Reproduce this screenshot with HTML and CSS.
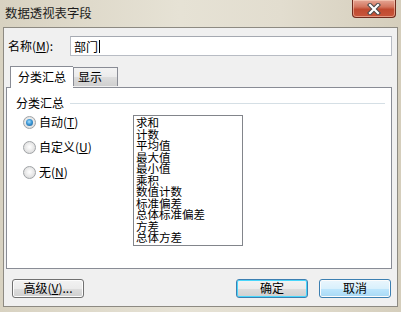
FILE: index.html
```html
<!DOCTYPE html>
<html lang="zh-CN">
<head>
    <meta charset="UTF-8">
    <title>数据透视表字段</title>
    <link rel="stylesheet" href="styles.css">
</head>
<body>

<div class="window">
    <!-- Title bar -->
    <div class="titlebar">
        <span class="title">数据透视表字段</span>
        <div class="close">
            <svg width="18" height="12" viewBox="0 0 18 12">
                <path d="M5 2 L13 10 M13 2 L5 10" stroke="#4a4a4a" stroke-width="4.2" stroke-linecap="square"/>
                <path d="M5 2 L13 10 M13 2 L5 10" stroke="#ffffff" stroke-width="2.2" stroke-linecap="square"/>
            </svg>
        </div>
    </div>

    <div class="client">
        <div class="name-row">
            <span class="name-label">名称(<u>M</u>):</span>
            <div class="name-input">部门<span class="caret"></span></div>
        </div>

        <div class="tabs">
            <div class="tab active">分类汇总</div>
            <div class="tab">显示</div>
        </div>

        <div class="panel">
            <div class="group-title">
                <span>分类汇总</span>
                <i class="group-line"></i>
            </div>

            <div class="group-body">
                <div class="radios">
                    <div class="radio checked"><span class="circle"></span>自动(<u>T</u>)</div>
                    <div class="radio"><span class="circle"></span>自定义(<u>U</u>)</div>
                    <div class="radio"><span class="circle"></span>无(<u>N</u>)</div>
                </div>

                <div class="listbox">
                    <div>求和</div>
                    <div>计数</div>
                    <div>平均值</div>
                    <div>最大值</div>
                    <div>最小值</div>
                    <div>乘积</div>
                    <div>数值计数</div>
                    <div>标准偏差</div>
                    <div>总体标准偏差</div>
                    <div>方差</div>
                    <div>总体方差</div>
                </div>
            </div>
        </div>

        <div class="buttons">
            <div class="btn">高级(<u>V</u>)...</div>
            <div class="spacer"></div>
            <div class="btn default">确定</div>
            <div class="btn hover">取消</div>
        </div>
    </div>
</div>

</body>
</html>
```

FILE: styles.css
```css
* {
    box-sizing: border-box;
    margin: 0;
    padding: 0;
}

body {
    font-family: "Noto Sans CJK SC", "DejaVu Sans", sans-serif;
    font-size: 12px;
    color: #000;
    background: #fff;
}

.window {
    width: 401px;
    height: 312px;
    background: linear-gradient(90deg, #d8d2c1 0%, #e6e2d5 45%, #e2ddcf 70%, #d5cebc 100%);
    display: flex;
    flex-direction: column;
}

/* Title bar */
.titlebar {
    height: 27px;
    display: flex;
    align-items: flex-start;
    justify-content: space-between;
    padding: 0 5px 0 5px;
}

.title {
    margin-top: 5px;
    font-size: 12.4px;
    line-height: 16px;
    color: #1c1c1c;
}

.close {
    width: 44px;
    height: 18px;
    border: 1px solid #6f2a1d;
    border-top: none;
    border-radius: 0 0 4px 4px;
    background: linear-gradient(180deg, #e5a695 0%, #d3765f 40%, #c04a30 55%, #c8553b 100%);
    box-shadow: inset 0 0 0 1px rgba(255, 220, 200, 0.5);
    display: flex;
    align-items: center;
    justify-content: center;
}

/* Client area */
.client {
    margin: 0 3px 5px 3px;
    flex: 1;
    background: #f0f0f0;
    border: 1px solid #8d8a82;
    display: flex;
    flex-direction: column;
}

.name-row {
    display: flex;
    align-items: center;
    padding: 8px 5px 0 4px;
}

.name-label {
    width: 62px;
    line-height: 16px;
}

.name-input {
    flex: 1;
    height: 20px;
    background: #fff;
    border: 1px solid #b8bcc4;
    border-top-color: #a5a9b1;
    padding: 0 0 0 3px;
    line-height: 17px;
    display: flex;
    align-items: center;
}

.caret {
    display: inline-block;
    width: 1px;
    height: 13px;
    background: #000;
    margin-left: 1px;
}

/* Tabs */
.tabs {
    display: flex;
    align-items: flex-end;
    margin: 9px 0 0 6px;
    height: 22px;
    position: relative;
    z-index: 1;
}

.tab {
    height: 19px;
    padding: 0 5px;
    border: 1px solid #898c95;
    border-bottom: none;
    background: linear-gradient(180deg, #f3f3f3 0%, #ebebeb 50%, #dddddd 51%, #cfcfcf 100%);
    line-height: 18px;
    margin-bottom: 1px;
}

.tab.active {
    height: 22px;
    padding: 0 7px;
    background: #fff;
    margin-bottom: -1px;
    border-right: none;
    line-height: 20px;
}

.tab + .tab {
    padding: 0 15px 0 4px;
    border-left: 1px solid #898c95;
}

.panel {
    margin: 0 5px 0 2px;
    height: 182px;
    background: #fff;
    border: 1px solid #898c95;
    padding: 7px 6px 0 9px;
}

.group-title {
    display: flex;
    align-items: center;
    line-height: 16px;
}

.group-line {
    flex: 1;
    height: 2px;
    margin: 1px 0 0 6px;
    border-top: 1px solid #d5dfe5;
    border-bottom: 1px solid #fff;
}

.group-body {
    display: flex;
    padding-top: 3px;
}

.radios {
    width: 117px;
    padding: 0 0 0 7px;
    display: flex;
    flex-direction: column;
    gap: 9px;
}

.radio {
    display: flex;
    align-items: center;
    line-height: 16px;
}

.circle {
    width: 13px;
    height: 13px;
    border-radius: 50%;
    border: 1px solid #a0a3a6;
    background: radial-gradient(circle at 50% 45%, #ffffff 0%, #e4e4e4 60%, #d0d0d0 100%);
    margin-right: 3px;
    display: flex;
    align-items: center;
    justify-content: center;
}

.radio.checked .circle::after {
    content: "";
    width: 7px;
    height: 7px;
    border-radius: 50%;
    background: radial-gradient(circle at 45% 40%, #a8e0ff 0%, #3d98d6 45%, #14528a 100%);
}

.listbox {
    width: 110px;
    height: 131px;
    margin-top: 1px;
    border: 1px solid #82858b;
    background: #fff;
    padding: 1px 0 0 2px;
    font-size: 11.5px;
    line-height: 11.5px;
}

/* Bottom buttons */
.buttons {
    display: flex;
    align-items: center;
    padding: 10px 6px 0 8px;
    gap: 11px;
}

.spacer {
    flex: 1;
}

.btn {
    width: 72px;
    height: 19px;
    border: 1px solid #707070;
    border-radius: 3px;
    background: linear-gradient(180deg, #f2f2f2 0%, #ebebeb 50%, #dddddd 51%, #cfcfcf 100%);
    box-shadow: inset 0 0 0 1px #fcfcfc;
    text-align: center;
    line-height: 16px;
}

.btn.default {
    border-color: #3c7fb1;
    box-shadow: inset 0 0 0 1px #48d6fb;
}

.btn.hover {
    border-color: #3c7fb1;
    background: linear-gradient(180deg, #eaf6fd 0%, #d9f0fc 50%, #bee6fd 51%, #a7d9f5 100%);
}
```
